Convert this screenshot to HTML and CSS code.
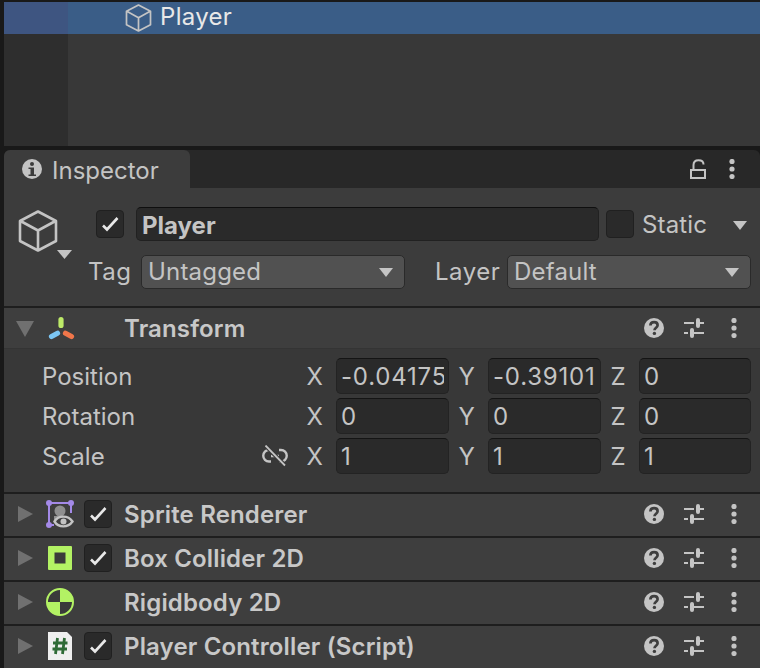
FILE: index.html
```html
<!DOCTYPE html>
<html lang="en">
<head>
<meta charset="utf-8">
<title>Inspector</title>
<link rel="stylesheet" href="styles.css">
</head>
<body>
<svg class="defs" width="0" height="0" aria-hidden="true">
  <symbol id="check" viewBox="0 0 26 26"><path d="M6 14.500l4 4L20.500 7" fill="none" stroke="#e8e8e8" stroke-width="2.600"/></symbol>
  <symbol id="help" viewBox="0 0 20 20"><circle cx="10" cy="10" r="10" fill="#c4c4c4"/><path d="M6.400 7.600c0-2.100 1.600-3.400 3.700-3.400s3.500 1.200 3.500 3c0 2.500-3.100 2.500-3.100 5" fill="none" stroke="#3e3e3e" stroke-width="2.700"/><circle cx="10.400" cy="15.400" r="1.700" fill="#3e3e3e"/></symbol>
  <symbol id="sliders" viewBox="0 0 20 20"><path d="M0 5h10M16 5h4M0 15h4M10 15h10" stroke="#c4c4c4" stroke-width="2" fill="none"/><rect x="12" y="0" width="4" height="10" rx="2" fill="#c4c4c4"/><rect x="6" y="10" width="4" height="10" rx="2" fill="#c4c4c4"/></symbol>
  <symbol id="dots" viewBox="0 0 10 20"><circle cx="5" cy="2.500" r="2.600" fill="#c4c4c4"/><circle cx="5" cy="10" r="2.600" fill="#c4c4c4"/><circle cx="5" cy="17.500" r="2.600" fill="#c4c4c4"/></symbol>
  <symbol id="cube" viewBox="0 0 40 42"><path d="M20 1.500L38 11v20L20 40.500 2 31V11zM2.500 11L20 20.500 37.500 11M20 20.500v20" fill="none" stroke="#c4c4c4" stroke-width="2.600" stroke-linejoin="round"/></symbol>
</svg>

<section class="hierarchy">
  <div class="hier-row">
    <svg class="hier-cube"><use href="#cube"/></svg>
    <span>Player</span>
  </div>
  <div class="hier-empty"></div>
</section>

<section class="inspector">
  <header class="tabbar">
    <div class="tab">
      <svg class="info" viewBox="0 0 20 20"><circle cx="10" cy="10" r="10" fill="#c4c4c4"/><circle cx="10" cy="5" r="2" fill="#3c3c3c"/><path d="M6.500 8.500H12v7h2v1.500H6.500v-1.500h2v-5.500h-2z" fill="#3c3c3c"/></svg>
      <span>Inspector</span>
    </div>
    <div class="tab-tools">
      <svg class="lock" viewBox="0 0 16 20"><path d="M1 11h14v8H1zM3.500 11V6C3.500 3 5.500 1.200 8.500 1.200S13.500 3 13.500 5.500" fill="none" stroke="#c4c4c4" stroke-width="2"/></svg>
      <svg class="dots"><use href="#dots"/></svg>
    </div>
  </header>

  <div class="go-head">
    <div class="go-row1">
      <svg class="go-icon" viewBox="0 0 54 50"><use href="#cube" width="40" height="42" x="0" y="0"/><path d="M39 40h15l-7.500 9z" fill="#c4c4c4"/></svg>
      <span class="checkbox"><svg><use href="#check"/></svg></span>
      <div class="name-field">Player</div>
      <span class="checkbox"></span>
      <span class="static">Static</span>
      <span class="caret static-caret"></span>
    </div>
    <div class="go-row2">
      <span class="lab">Tag</span>
      <div class="dropdown tag"><span>Untagged</span><span class="caret"></span></div>
      <span class="lab layer-lab">Layer</span>
      <div class="dropdown layer"><span>Default</span><span class="caret"></span></div>
    </div>
  </div>

  <div class="comp-head transform-head">
    <span class="fold open"></span>
    <svg class="comp-icon" viewBox="0 0 28 28"><g stroke-width="5.200" stroke-linecap="round" fill="none"><path d="M14 5.500v6" stroke="#bdea68"/><path d="M4.500 22.500l6-3.200" stroke="#7cc7f5"/><path d="M18.500 19.300l6 3.200" stroke="#f0764a"/></g></svg>
    <span class="spacer"></span>
    <span class="comp-title">Transform</span>
    <svg class="tool help"><use href="#help"/></svg>
    <svg class="tool sliders"><use href="#sliders"/></svg>
    <svg class="tool dots"><use href="#dots"/></svg>
  </div>

  <div class="transform-body">
    <div class="vec-row">
      <span class="vec-label">Position</span>
      <span class="axis">X</span><div class="num"><span class="num-text">-0.04175</span></div>
      <span class="axis">Y</span><div class="num"><span class="num-text">-0.39101</span></div>
      <span class="axis axis-z">Z</span><div class="num num-last"><span class="num-text">0</span></div>
    </div>
    <div class="vec-row">
      <span class="vec-label">Rotation</span>
      <span class="axis">X</span><div class="num"><span class="num-text">0</span></div>
      <span class="axis">Y</span><div class="num"><span class="num-text">0</span></div>
      <span class="axis axis-z">Z</span><div class="num num-last"><span class="num-text">0</span></div>
    </div>
    <div class="vec-row">
      <span class="vec-label">Scale</span>
      <svg class="unlink" viewBox="0 0 26 22"><g fill="none"><path d="M9 5H7a5.700 5.700 0 0 0 0 11.500h2M17 5h2a5.700 5.700 0 0 1 0 11.500h-2M9 11h8" stroke="#c4c4c4" stroke-width="2.400"/><path d="M3.500 .5L23 20.500" stroke="#383838" stroke-width="4"/><path d="M3.500 .5L23 20.500" stroke="#c4c4c4" stroke-width="1.800"/></g></svg>
      <span class="axis">X</span><div class="num"><span class="num-text">1</span></div>
      <span class="axis">Y</span><div class="num"><span class="num-text">1</span></div>
      <span class="axis axis-z">Z</span><div class="num num-last"><span class="num-text">1</span></div>
    </div>
  </div>

  <div class="comp-head">
    <span class="fold"></span>
    <svg class="comp-icon" viewBox="0 0 28 28"><path d="M3 25V3h22v10" fill="none" stroke="#a48ae8" stroke-width="2"/><path d="M3 25h5" fill="none" stroke="#a48ae8" stroke-width="2"/><circle cx="3" cy="3" r="3" fill="#a48ae8"/><circle cx="25" cy="3" r="3" fill="#a48ae8"/><circle cx="3" cy="25" r="3" fill="#a48ae8"/><circle cx="14" cy="11" r="5.500" fill="#8f8f8f"/><path d="M8 20v-4h12v4z" fill="#8f8f8f"/><path d="M8.500 21.500c4-6.500 13.500-6.500 18 0-4.500 6.500-14 6.500-18 0z" fill="#3e3e3e" stroke="#c4c4c4" stroke-width="2.400"/><circle cx="17.500" cy="21.500" r="3" fill="#c4c4c4"/></svg>
    <span class="checkbox"><svg><use href="#check"/></svg></span>
    <span class="comp-title">Sprite Renderer</span>
    <svg class="tool help"><use href="#help"/></svg>
    <svg class="tool sliders"><use href="#sliders"/></svg>
    <svg class="tool dots"><use href="#dots"/></svg>
  </div>

  <div class="comp-head">
    <span class="fold"></span>
    <svg class="comp-icon" viewBox="0 0 28 28"><rect x="2" y="2" width="24" height="24" rx="1" fill="#b3f264"/><rect x="8.500" y="8.500" width="11" height="11" fill="#3a3a3a"/></svg>
    <span class="checkbox"><svg><use href="#check"/></svg></span>
    <span class="comp-title">Box Collider 2D</span>
    <svg class="tool help"><use href="#help"/></svg>
    <svg class="tool sliders"><use href="#sliders"/></svg>
    <svg class="tool dots"><use href="#dots"/></svg>
  </div>

  <div class="comp-head">
    <span class="fold"></span>
    <svg class="comp-icon" viewBox="0 0 28 28"><circle cx="14" cy="14" r="13" fill="#3a3a3a" stroke="#b3f264" stroke-width="2"/><path d="M14 1a13 13 0 0 1 13 13H14zM14 14v13A13 13 0 0 1 1 14z" fill="#b3f264"/></svg>
    <span class="checkbox ghost"></span>
    <span class="comp-title">Rigidbody 2D</span>
    <svg class="tool help"><use href="#help"/></svg>
    <svg class="tool sliders"><use href="#sliders"/></svg>
    <svg class="tool dots"><use href="#dots"/></svg>
  </div>

  <div class="comp-head">
    <span class="fold"></span>
    <svg class="comp-icon" viewBox="0 0 28 28"><path d="M2 0h19l5 5v23H2z" fill="#efefef"/><path d="M11.500 6l-2 16M18.500 6l-2 16M7 11h14.500M6.500 17h14.500" stroke="#2f6b37" stroke-width="2.800" fill="none"/></svg>
    <span class="checkbox"><svg><use href="#check"/></svg></span>
    <span class="comp-title">Player Controller (Script)</span>
    <svg class="tool help"><use href="#help"/></svg>
    <svg class="tool sliders"><use href="#sliders"/></svg>
    <svg class="tool dots"><use href="#dots"/></svg>
  </div>
</section>
</body>
</html>
```
FILE: styles.css
```css
* { box-sizing: border-box; }
html, body { margin: 0; height: 100%; }
body {
  width: 760px;
  height: 668px;
  overflow: hidden;
  padding-left: 4px;
  padding-top: 2px;
  background: #191919;
  font-family: Inter, "Noto Sans", sans-serif;
  font-size: 24px;
  color: #c4c4c4;
}
.defs { position: absolute; }

/* Hierarchy */
.hierarchy { height: 144px; background: #383838; display: flex; flex-direction: column; }
.hier-row {
  height: 32px;
  padding-left: 121px;
  display: flex;
  align-items: center;
  gap: 8px;
  color: #e8e8e8;
  letter-spacing: .3px;
  background: linear-gradient(to right, #3e5581 64px, #3a5d87 64px);
}
.hier-row span { margin-bottom: 3px; }
.hier-cube { width: 27px; height: 28px; }
.hier-empty { flex: 1; background: linear-gradient(to right, #2e2e2e 64px, #383838 64px); }

/* Inspector */
.inspector { margin-top: 4px; }
.tabbar {
  height: 38px;
  display: flex;
  justify-content: space-between;
  background: #282828;
  border-radius: 6px 6px 0 0;
}
.tab {
  width: 186px;
  background: #3c3c3c;
  border-radius: 6px 6px 0 0;
  padding-left: 18px;
  display: flex;
  align-items: center;
  gap: 10px;
}
.tab span { margin-top: 2px; }
.info { width: 20px; height: 20px; }
.tab-tools { display: flex; align-items: center; gap: 21px; padding-right: 23px; }
.lock { width: 16px; height: 20px; }
.dots { width: 10px; height: 20px; }

.go-head { height: 118px; background: #3c3c3c; padding: 19px 0 0 14px; }
.go-row1 { display: flex; align-items: flex-start; height: 48px; }
.go-icon { width: 54px; height: 50px; margin-right: 24px; margin-top: 3px; flex: none; }
.checkbox {
  width: 28px;
  height: 28px;
  flex: none;
  background: #2a2a2a;
  border: 1px solid #202020;
  border-radius: 4px;
  margin-top: 3px;
}
.checkbox svg { display: block; width: 26px; height: 26px; }
.checkbox.ghost { visibility: hidden; }
.name-field {
  width: 463px;
  height: 34px;
  margin: 0 7px 0 12px;
  padding-left: 5px;
  background: #2a2a2a;
  border: 1px solid #212121;
  border-top-color: #0f0f0f;
  border-radius: 5px;
  font-weight: 700;
  line-height: 35px;
}
.static { margin: 2px 0 0 8px; line-height: 32px; letter-spacing: .15px; }
.caret {
  width: 0;
  height: 0;
  border-style: solid;
  border-width: 9px 7.500px 0;
  border-color: #c4c4c4 transparent transparent;
  flex: none;
}
.static-caret { margin: 14px 0 0 26px; }
.go-row2 { display: flex; align-items: center; padding-left: 70px; height: 34px; letter-spacing: .2px; }
.lab { width: 53px; line-height: 34px; letter-spacing: .5px; }
.dropdown {
  height: 34px;
  display: flex;
  align-items: center;
  justify-content: space-between;
  padding: 0 11px 2px 6px;
  background: #515151;
  border: 1px solid #2a2a2a;
  border-radius: 5px;
}
.dropdown .caret { margin-top: 2px; }
.tag { width: 264px; }
.layer-lab { margin-left: 30px; width: 72px; }
.layer { width: 244px; }

/* Components */
.comp-head {
  height: 42px;
  display: flex;
  align-items: center;
  padding-bottom: 2px;
  background: #3e3e3e;
  box-shadow: 0 -2px 0 #1e1e1e;
  margin-top: 2px;
  font-weight: 600;
  letter-spacing: .15px;
}
.transform-head { height: 41px; padding-bottom: 1px; border-bottom: 1px solid #343434; }
.transform-head .comp-title { margin-top: 2px; }
.fold {
  width: 0;
  height: 0;
  margin-left: 14px;
  border-style: solid;
  border-width: 8.500px 0 8.500px 15px;
  border-color: transparent transparent transparent #707070;
  flex: none;
}
.fold.open { border-width: 16px 9px 0; border-color: #707070 transparent transparent; margin: 2px 0 0 12px; }
.comp-icon { width: 28px; height: 28px; margin-left: 13px; flex: none; }
.comp-head .checkbox { margin: 0 12px 0 10px; }
.spacer { width: 49px; flex: none; }
.comp-title { flex: 1; color: #c8c8c8; }
.tool { flex: none; }
.tool.help { width: 20px; height: 20px; }
.tool.sliders { width: 20px; height: 20px; margin-left: 20px; }
.tool.dots { width: 10px; height: 20px; margin: 0 21px 0 25px; }

.transform-body { height: 143px; background: #383838; padding-top: 9px; }
.vec-row { height: 36px; margin-bottom: 4px; display: flex; align-items: center; padding-left: 38px; position: relative; }
.vec-label { width: 263px; }
.unlink { position: absolute; left: 258px; top: 7px; width: 26px; height: 22px; }
.axis { width: 31px; padding-left: 1.500px; }
.axis-z { width: 30px; }
.num {
  width: 113px;
  height: 36px;
  padding: 0 4px;
  line-height: 36px;
  letter-spacing: .8px;
  background: #2a2a2a;
  border: 1px solid #232323;
  border-top-color: #141414;
  border-radius: 5px;
  margin-right: 8px;
}
.num-text { display: block; overflow: hidden; white-space: nowrap; }
.num-last { width: 112px; margin-right: 0; }
```
